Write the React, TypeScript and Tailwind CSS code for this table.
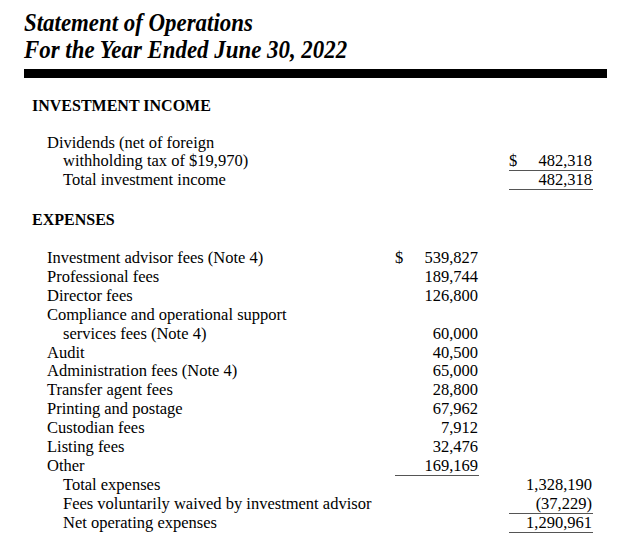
type Row = {
  label: string;
  indent?: boolean;
  c1?: string;
  c2?: string;
  d1?: boolean;
  d2?: boolean;
  u1?: boolean;
  u2?: boolean;
};

const incomeRows: Row[] = [
  { label: "Dividends (net of foreign" },
  { label: "withholding tax of $19,970)", indent: true, c2: "482,318", d2: true, u2: true },
  { label: "Total investment income", indent: true, c2: "482,318", u2: true },
];

const expenses: Row[] = [
  { label: "Investment advisor fees (Note 4)", c1: "539,827", d1: true },
  { label: "Professional fees", c1: "189,744" },
  { label: "Director fees", c1: "126,800" },
  { label: "Compliance and operational support" },
  { label: "services fees (Note 4)", indent: true, c1: "60,000" },
  { label: "Audit", c1: "40,500" },
  { label: "Administration fees (Note 4)", c1: "65,000" },
  { label: "Transfer agent fees", c1: "28,800" },
  { label: "Printing and postage", c1: "67,962" },
  { label: "Custodian fees", c1: "7,912" },
  { label: "Listing fees", c1: "32,476" },
  { label: "Other", c1: "169,169", u1: true },
  { label: "Total expenses", indent: true, c2: "1,328,190" },
  { label: "Fees voluntarily waived by investment advisor", indent: true, c2: "(37,229)", u2: true },
  { label: "Net operating expenses", indent: true, c2: "1,290,961", u2: true },
];

const Cell = ({ value, dollar, line }: { value?: string; dollar?: boolean; line?: boolean }) => (
  <div
    className={`w-[84px] h-full flex justify-between pr-[1px] ${line ? "border-b-[1.5px] border-[#555]" : ""}`}
  >
    <span>{dollar ? "$" : ""}</span>
    <span>{value ?? ""}</span>
  </div>
);

const StatementRow = ({ row }: { row: Row }) => (
  <div className="flex h-[18.95px] leading-[18.95px] whitespace-nowrap">
    <div className={`flex-1 ${row.indent ? "pl-[16px]" : ""}`}>{row.label}</div>
    <Cell value={row.c1} dollar={row.d1} line={row.u1} />
    <div className="w-[30px]" />
    <Cell value={row.c2} dollar={row.d2} line={row.u2} />
  </div>
);

export default function App() {
  return (
    <div className="w-[640px] h-[538px] bg-white text-black font-['Liberation_Serif','Times_New_Roman',serif] overflow-hidden">
      {/* Title */}
      <div className="pl-6 pt-[9px] whitespace-nowrap">
        <h1 className="text-[26px] leading-[27px] font-bold italic origin-left scale-x-[0.88]">
          Statement of Operations
        </h1>
        <h2 className="text-[26px] leading-[27px] font-bold italic origin-left scale-x-[0.88]">
          For the Year Ended June 30, 2022
        </h2>
      </div>

      <div className="ml-6 mt-[5.5px] w-[583px] h-[9px] bg-black" />

      {/* Investment income */}
      <div className="pl-8 mt-[18px] h-[19px] leading-[19px] text-[16px] font-bold">INVESTMENT INCOME</div>

      <div className="pl-[47px] pr-[47px] mt-[19px] text-[16.5px]">
        {incomeRows.map((r, i) => (
          <StatementRow key={i} row={r} />
        ))}
      </div>

      {/* Expenses */}
      <div className="pl-8 mt-[19.5px] h-[19px] leading-[19px] text-[16px] font-bold">EXPENSES</div>

      <div className="pl-[47px] pr-[47px] mt-[20px] text-[16.5px]">
        {expenses.map((r, i) => (
          <StatementRow key={i} row={r} />
        ))}
      </div>
    </div>
  );
}
